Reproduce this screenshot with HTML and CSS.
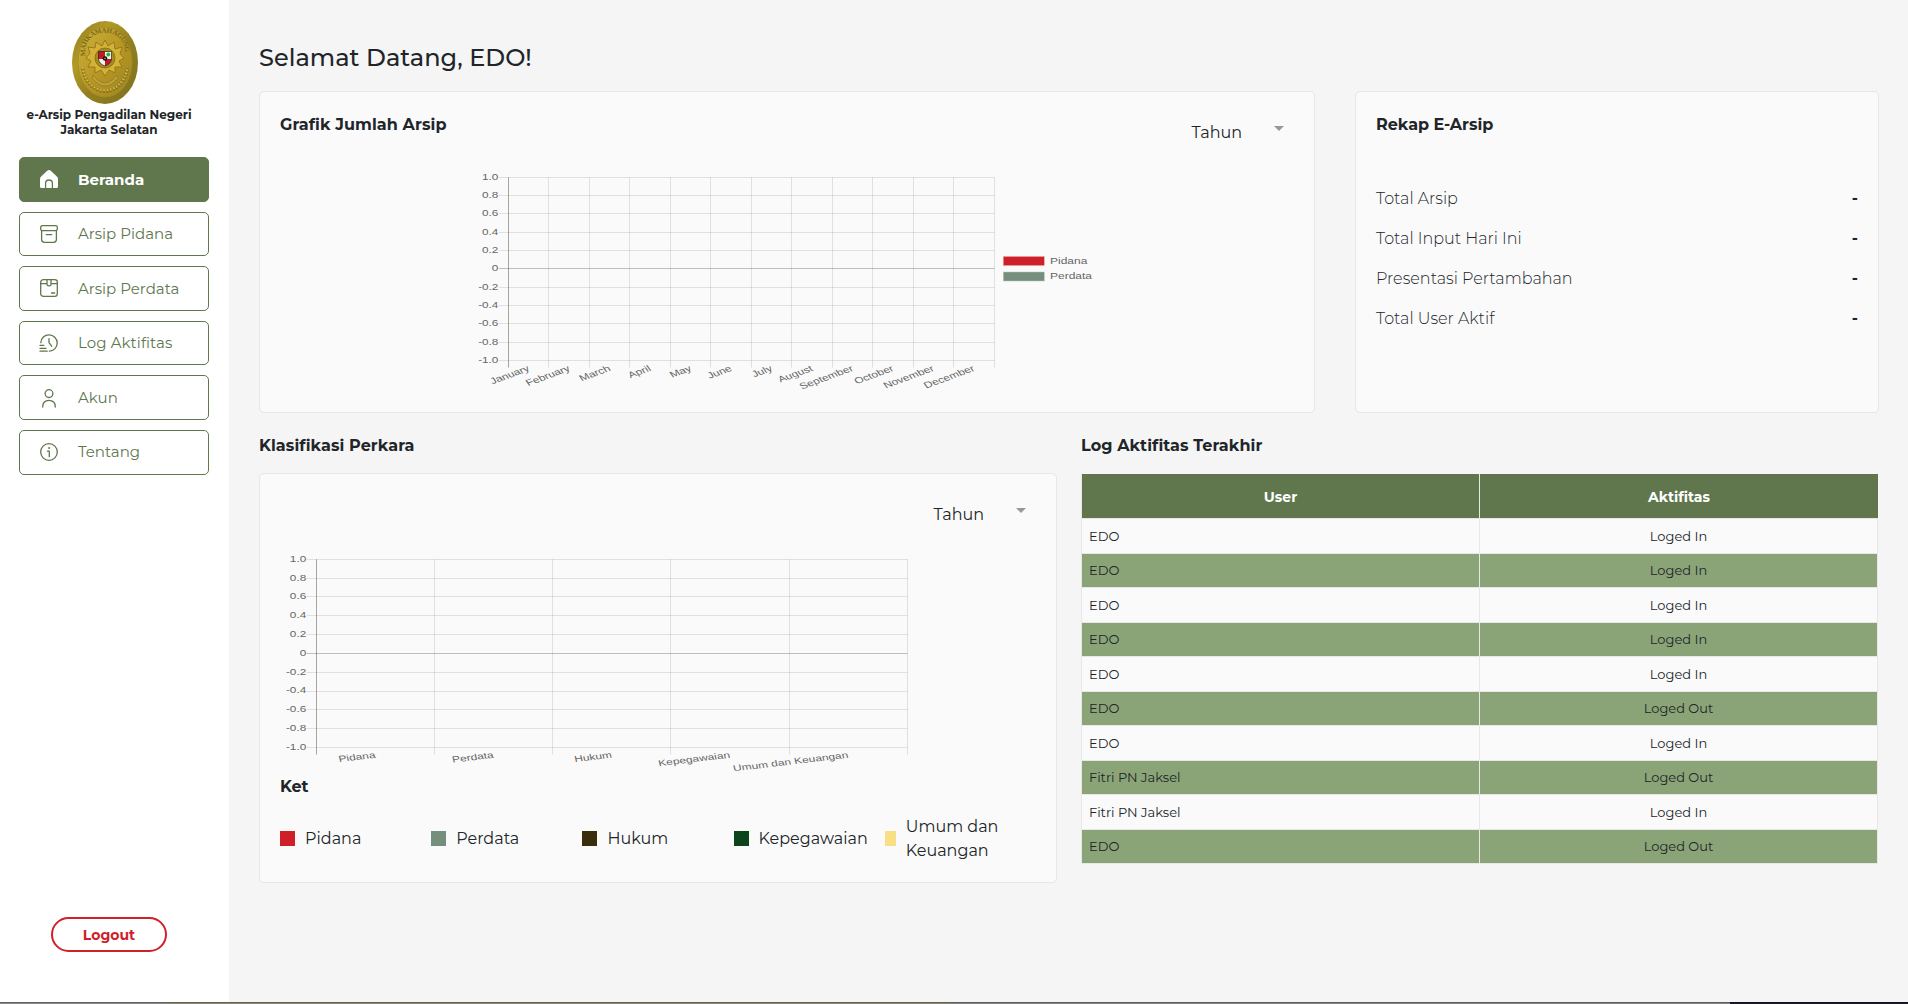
FILE: index.html
```html
<!DOCTYPE html>
<html lang="id">
<head>
<meta charset="utf-8">
<title>e-Arsip Pengadilan Negeri Jakarta Selatan</title>
<link rel="stylesheet" href="styles.css">
</head>
<body>
<div class="app">
  <aside class="sidebar">
    <svg class="logo" viewBox="0 0 66 83">
      <defs>
        <linearGradient id="rim" x1="0" y1="0" x2="1" y2="1"><stop offset="0" stop-color="#8d7b1d"/><stop offset=".3" stop-color="#b39a27"/><stop offset=".55" stop-color="#94801f"/><stop offset="1" stop-color="#7d6f20"/></linearGradient>
        <linearGradient id="face" x1="0" y1="0" x2="1" y2="1"><stop offset="0" stop-color="#cdb23c"/><stop offset=".5" stop-color="#b99725"/><stop offset="1" stop-color="#9c8420"/></linearGradient>
        <path id="arc" d="M13.5 35C9 4 57 4 52.5 35"/>
      </defs>
      <ellipse cx="33" cy="41.5" rx="33" ry="41.5" fill="url(#rim)"/>
      <ellipse cx="33" cy="41" rx="27" ry="35" fill="url(#face)" stroke="#a08c28" stroke-width=".8"/>
      <text class="logo-text"><textPath href="#arc" textLength="66">MAHKAMAH AGUNG</textPath></text>
      <path d="M33 19l3 6 6-4 1 7 7-2-2 7 4 4-5 3 3 6-7 0 0 6-6-3-4 6-4-6-6 3 0-6-7 0 3-6-5-3 4-5-2-6 7 1 1-6 6 4z" fill="#d3b235" stroke="#8f761a" stroke-width=".9"/>
      <circle cx="33" cy="37" r="10" fill="#a88b20" stroke="#7e6917" stroke-width=".8"/>
      <path d="M26.500 30.500H33V38H26.500z" fill="#c5162b"/><path d="M33 30.500H39.500V38H33z" fill="#f1f4ed"/><path d="M26.500 38H33V45Q27 43 26.500 38z" fill="#f1f4ed"/><path d="M33 38H39.500Q39 43 33 45z" fill="#c5162b"/>
      <path d="M26.500 30.500H39.500V38Q39 43 33 45 27 43 26.500 38z" fill="none" stroke="#2b2420" stroke-width=".7"/>
      <circle cx="36.300" cy="33.500" r="1.900" fill="#23b52b"/><circle cx="33" cy="37.500" r="2.300" fill="#151515"/><circle cx="33" cy="37.500" r=".8" fill="#c9a92c"/>
      <path d="M10.500 47C16 78 50 78 55.500 47" fill="none" stroke="#85711c" stroke-width="3.400" stroke-dasharray="2 1.300"/>
      <path d="M10.500 46.500C16 77 50 77 55.500 46.500" fill="none" stroke="#cfb749" stroke-width="2" stroke-dasharray="1.600 1.700"/>
      <path d="M21 54Q33 70 45 54L46 57Q33 73 20 57z" fill="#bfa338" stroke="#8c781d" stroke-width=".7"/>
    </svg>
    <div class="brand">e-Arsip Pengadilan Negeri<br>Jakarta Selatan</div>
    <nav class="menu">
      <a class="item active"><svg class="icon" viewBox="0 0 18 18"><path d="M9 0Q10 0 11 1L16.600 6.300Q18 7.600 18 9V16.500Q18 18 16.500 18H1.500Q0 18 0 16.500V9Q0 7.600 1.400 6.300L7 1Q8 0 9 0z" fill="#fff"/><path d="M5.600 18V13.300Q5.600 10 9 10T12.400 13.300V18" fill="none" stroke="#60774e" stroke-width="1.300"/></svg><span>Beranda</span></a>
      <a class="item"><svg class="icon line" viewBox="0 0 18 18"><rect x=".7" y=".7" width="16.600" height="5" rx="1.600"/><path d="M1.600 5.700V14.500Q1.600 17.300 4.400 17.300H13.600Q16.400 17.300 16.400 14.500V5.700M6.200 9.600H11.800"/></svg><span>Arsip Pidana</span></a>
      <a class="item"><svg class="icon line" viewBox="0 0 18 18"><rect x=".7" y=".7" width="16.600" height="16.600" rx="2.600"/><path d="M.7 4.600H7M11 4.600H17.300M7 .7V5.500Q7 6.900 9 6.900T11 5.500V.7M11.500 14H14.700"/></svg><span>Arsip Perdata</span></a>
      <a class="item wide"><svg class="icon line" viewBox="0 0 18 18"><path d="M.8 8.700A8.200 8.200 0 1 1 9.400 17.200M9 4.600V8.600L11.700 12.200M0 11.300H3.900M0 14.300H6M0 17.200H7.200"/></svg><span>Log Aktifitas</span></a>
      <a class="item"><svg class="icon line" viewBox="0 0 18 18"><circle cx="9" cy="4.600" r="3.900"/><path d="M2.700 18C2.500 13.700 5.200 11.300 9 11.300S15.500 13.700 15.300 18"/></svg><span>Akun</span></a>
      <a class="item"><svg class="icon line" viewBox="0 0 18 18"><circle cx="9" cy="9" r="8.300"/><path d="M7.500 8.200H9.300V13.700"/><circle cx="9" cy="5" r=".7" fill="#60774e" stroke-width=".5"/></svg><span>Tentang</span></a>
    </nav>
    <button class="logout">Logout</button>
  </aside>
  <main class="main">
    <h1 class="hello">Selamat Datang, EDO!</h1>
    <div class="row-top">
      <section class="card graph">
        <div class="card-head"><h2 class="wide">Grafik Jumlah Arsip</h2><div class="select"><span>Tahun</span><i class="caret"></i></div></div>
        <svg class="chart chart-month" viewBox="470 165 660 230">
          <g class="grid" id="grid1"></g>
          <g class="labels" id="labels1"></g>
          <rect x="1003.300" y="256.500" width="41" height="9" fill="#cf2029" stroke="#e9a3a6" stroke-width=".5"/>
          <rect x="1003.300" y="272" width="41" height="9" fill="#768f7c" stroke="#b9c6bc" stroke-width=".5"/>
          <g class="labels"><text transform="translate(1050 263.900) scale(1 .74)">Pidana</text><text transform="translate(1050 279.200) scale(1 .74)">Perdata</text></g>
        </svg>
      </section>
      <section class="card recap">
        <h2>Rekap E-Arsip</h2>
        <dl>
          <div><dt>Total Arsip</dt><dd>-</dd></div>
          <div><dt>Total Input Hari Ini</dt><dd>-</dd></div>
          <div><dt>Presentasi Pertambahan</dt><dd>-</dd></div>
          <div><dt>Total User Aktif</dt><dd>-</dd></div>
        </dl>
      </section>
    </div>
    <div class="row-bottom">
      <section class="classify">
        <h2 class="wide">Klasifikasi Perkara</h2>
        <div class="card">
          <div class="card-head right"><div class="select"><span>Tahun</span><i class="caret"></i></div></div>
          <svg class="chart chart-class" viewBox="280 545 650 230"><g class="grid" id="grid2"></g><g class="labels" id="labels2"></g></svg>
          <h2 class="ket">Ket</h2>
          <ul class="legend">
            <li><i class="sw red"></i><span>Pidana</span></li>
            <li><i class="sw sage"></i><span>Perdata</span></li>
            <li><i class="sw brown"></i><span>Hukum</span></li>
            <li><i class="sw green"></i><span>Kepegawaian</span></li>
            <li><i class="sw yellow"></i><span>Umum dan<br>Keuangan</span></li>
          </ul>
        </div>
      </section>
      <section class="log">
        <h2 class="wide">Log Aktifitas Terakhir</h2>
        <div class="table">
          <div class="tr th"><div>User</div><div>Aktifitas</div></div>
          <div class="tr"><div>EDO</div><div>Loged In</div></div>
          <div class="tr"><div>EDO</div><div>Loged In</div></div>
          <div class="tr"><div>EDO</div><div>Loged In</div></div>
          <div class="tr"><div>EDO</div><div>Loged In</div></div>
          <div class="tr"><div>EDO</div><div>Loged In</div></div>
          <div class="tr"><div>EDO</div><div>Loged Out</div></div>
          <div class="tr"><div>EDO</div><div>Loged In</div></div>
          <div class="tr"><div>Fitri PN Jaksel</div><div>Loged Out</div></div>
          <div class="tr"><div>Fitri PN Jaksel</div><div>Loged In</div></div>
          <div class="tr"><div>EDO</div><div>Loged Out</div></div>
        </div>
      </section>
    </div>
  </main>
</div>
<footer class="strip"></footer>
<script src="charts.js"></script>
</body>
</html>
```
FILE: styles.css
```css
* { box-sizing: border-box; margin: 0; padding: 0; }
body { height: 1004px; display: flex; flex-direction: column; overflow: hidden; background: #f5f5f5; color: #212529; font: 16px/24px Montserrat, Inter, sans-serif; font-variant-ligatures: none; }
.app { display: flex; height: 1002px; }
.strip { height: 2px; background: linear-gradient(90deg, #8b8b8b 169px, #8d8a78 169px 950px, #858585 950px 1730px, #1b1b2b 1730px); border-top: 1px solid rgba(0, 0, 0, .3); }
h2 { font-size: 16px; line-height: 24px; font-weight: 700; white-space: nowrap; }
.wide { letter-spacing: .09px; }

.sidebar { width: 229px; background: #fff; padding: 21px 20px 50px 19px; display: flex; flex-direction: column; }
.logo { width: 66px; height: 83px; margin-left: 53px; flex: none; }
.logo-text { font: 700 7px "Liberation Serif", serif; fill: #7d6a18; }
.brand { margin-top: 3px; margin-left: -19px; width: 218px; text-align: center; font-size: 12px; line-height: 15px; font-weight: 700; }
.menu { margin-top: 20px; display: flex; flex-direction: column; gap: 10px; }
.item { width: 190px; height: 44.6px; border: 1px solid #60774e; border-radius: 5px; padding-left: 20px; display: flex; align-items: center; gap: 20px; color: #60774e; font-size: 15px; white-space: nowrap; }
.item.active { background: #60774e; color: #fff; font-weight: 700; }
.item:nth-child(odd):nth-child(-n+3) span { padding-top: 1px; }
.icon { width: 18px; height: 18px; }
.line { fill: none; stroke: #60774e; stroke-width: 1.3; stroke-linecap: round; stroke-linejoin: round; overflow: visible; }
.logout { margin-top: auto; margin-left: 32px; width: 116px; height: 35px; border: 2px solid #d0202a; border-radius: 18px; background: #fff; color: #d0202a; font: 700 14px/20px Montserrat, Inter, sans-serif; }

.main { flex: 1; padding: 43px 30px 0; }
.hello { font-size: 24px; line-height: 30px; font-weight: 500; letter-spacing: .04px; }
.card { background: #fafafa; border: 1px solid #e7e7e7; border-radius: 5px; padding: 20px; }
.row-top { display: flex; gap: 40px; margin-top: 18px; height: 322px; }
.graph { width: 1056px; }
.recap { width: 524px; }
.card-head { display: flex; justify-content: space-between; height: 53px; }
.card-head.right { justify-content: flex-end; }
.recap h2, .card-head h2 { padding-top: 1px; }
.select { display: flex; width: 102.5px; padding-top: 9px; justify-content: space-between; }
.caret { width: 0; height: 0; margin: 5px 10px 0 0; border: 5px solid transparent; border-top-color: #999; border-bottom: 0; }
.chart { display: block; height: 230px; }
.chart-month { width: 660px; margin-left: 190px; }
.chart-class { width: 650px; margin-top: -2px; }
.grid path { fill: none; stroke: rgba(0, 0, 0, .1); }
.grid .zero { stroke: rgba(0, 0, 0, .24); }
.grid .axis { stroke: rgba(0, 0, 0, .34); }
.labels { font: 12px "Liberation Sans", Arial, sans-serif; fill: #666; }
.labels .num, .labels .cat { text-anchor: end; }
dl { margin-top: 42px; }
dl div { display: flex; justify-content: space-between; height: 40px; padding-top: 8px; }
dt { font-weight: 300; }
dd { font-weight: 700; }

.row-bottom { display: flex; gap: 24px; margin-top: 21px; }
.row-bottom section > h2 { margin-bottom: 15px; }
.classify { width: 798px; }
.classify .card { height: 410px; }
.legend { list-style: none; display: grid; grid-template-columns: repeat(5, 151.2px); margin-top: 14px; height: 48px; }
.legend li { display: flex; align-items: center; gap: 10px; white-space: nowrap; }
.legend span { padding-top: 2px; }
.sw { width: 15px; height: 15px; }
.red { background: #cf202a; }
.sage { background: #768f7c; }
.brown { background: #3a2d0c; }
.green { background: #0c451b; }
.yellow { background: #f8df85; width: 11px; }
.log { width: 797px; }
.table { border: 1px solid #e7e7e7; border-top: 0; padding-top: 1px; font-size: 13px; }
.tr { display: grid; grid-template-columns: 398px 397px; height: 34px; background: #fafafa; border-bottom: 1px solid #e7e7e7; }
.tr:nth-child(even) { height: 35px; }
.tr:nth-child(odd) { background: #8aa477; padding-bottom: 1px; }
.tr.th { height: 45px; padding: 1px 0 0; background: #60774e; color: #fff; font-size: 14px; font-weight: 700; text-align: center; margin-right: -1px; grid-template-columns: 398px 398px; }
.tr div { display: flex; align-items: center; padding-left: 7px; }
.tr div:first-child { border-right: 1px solid #e7e7e7; margin-bottom: -1px; padding-bottom: 1px; }
.tr:nth-child(even) div:first-child { margin-bottom: 0; padding-bottom: 0; }
.tr div:last-child, .tr.th div { justify-content: center; padding-left: 0; }
.tr.th div:first-child { margin: -1px 0 0; padding: 1px 0 0; }
.tr:last-child { border-bottom: 0; height: 33px; }
```
FILE: charts.js
```js
function drawChart(id, c) {
  let grid = '', text = '';
  const step = (c.bottom - c.top) / 10;
  for (let i = 0; i <= 10; i++) {
    const y = c.top + step * i, v = 1 - i * 0.2;
    grid += `<path class="${i === 5 ? 'zero' : ''}" d="M${c.left - 10} ${(Math.floor(y) + 0.5)}H${c.right}"/>`;
    text += `<text class="num" transform="translate(${c.left - 10.3} ${y + 2.4}) scale(.98 .74)">${i === 5 ? '0' : v.toFixed(1)}</text>`;
  }
  const w = (c.right - c.left) / c.names.length;
  for (let i = 0; i <= c.names.length; i++) {
    const x = c.left + w * i;
    grid += `<path class="${i === 0 ? 'axis' : ''}" d="M${Math.floor(x - 0.2) + 0.5} ${c.top}V${c.bottom + 7}"/>`;
    if (i < c.names.length) {
      text += `<text class="cat" transform="translate(${x + w / 2 - 0.3} ${c.bottom + 7.3}) scale(1 .72) rotate(${-c.angle})" dy="4">${c.names[i]}</text>`;
    }
  }
  document.getElementById('grid' + id).innerHTML = grid;
  document.getElementById('labels' + id).innerHTML = text;
}
drawChart(1, { left: 508.7, right: 994.3, top: 177.3, bottom: 360.5, angle: 27,
  names: ['January', 'February', 'March', 'April', 'May', 'June', 'July', 'August', 'September', 'October', 'November', 'December'] });
drawChart(2, { left: 316.5, right: 907.5, top: 559.3, bottom: 747.5, angle: 9.4,
  names: ['Pidana', 'Perdata', 'Hukum', 'Kepegawaian', 'Umum dan Keuangan'] });
```
